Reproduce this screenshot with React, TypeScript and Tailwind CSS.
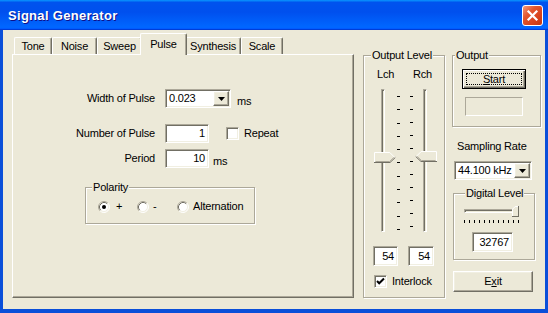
import React from "react";

const sunken =
  "border border-t-[#aca899] border-l-[#aca899] border-r-white border-b-white shadow-[inset_1px_1px_#716f64,inset_-1px_-1px_#f1efe2]";
const raised =
  "border border-t-white border-l-white border-r-[#716f64] border-b-[#716f64] shadow-[inset_-1px_-1px_#aca899,inset_1px_1px_#f1efe2]";
const track =
  "border border-t-[#aca899] border-l-[#aca899] border-r-white border-b-white shadow-[inset_1px_1px_#716f64] bg-[#ece9d8]";
const group = "border border-[#aca899] shadow-[1px_1px_#fff,inset_1px_1px_#fff]";

const tabs = [
  { label: "Tone", w: "w-[38px]" },
  { label: "Noise", w: "w-[45px]" },
  { label: "Sweep", w: "w-[45px]" },
  { label: "Pulse", w: "w-[47px]", active: true },
  { label: "Synthesis", w: "w-[56px]" },
  { label: "Scale", w: "w-[42px]" },
];

const Arrow = () => (
  <svg width="7" height="4" viewBox="0 0 7 4">
    <path d="M0 0H7L3.5 4Z" fill="#000" />
  </svg>
);

const Combo = ({ value, className }: { value: string; className: string }) => (
  <div className={`flex bg-white p-[1px] ${sunken} ${className}`}>
    <span className="flex-1 self-center pl-[2px]">{value}</span>
    <span className={`w-[16px] flex items-center justify-center bg-[#ece9d8] ${raised}`}>
      <Arrow />
    </span>
  </div>
);

const Edit = ({ value, className }: { value: string; className: string }) => (
  <div className={`flex items-center justify-end pr-[3px] bg-white ${sunken} ${className}`}>
    {value}
  </div>
);

const Checkbox = ({ checked = false }: { checked?: boolean }) => (
  <div className={`w-[13px] h-[13px] shrink-0 flex items-center justify-center bg-white ${sunken}`}>
    {checked && (
      <svg width="11" height="11" viewBox="0 0 11 11">
        <path d="M2 5l2.2 2.3L9 2.5" stroke="#000" strokeWidth="2" fill="none" />
      </svg>
    )}
  </div>
);

const Radio = ({ checked = false }: { checked?: boolean }) => (
  <svg width="12" height="12" viewBox="0 0 12 12" className="shrink-0">
    <circle cx="6" cy="6" r="5" fill="#fff" />
    <path d="M2.11 9.89A5.5 5.5 0 0 1 9.89 2.11" stroke="#aca899" fill="none" />
    <path d="M2.82 9.18A4.5 4.5 0 0 1 9.18 2.82" stroke="#716f64" fill="none" />
    <path d="M9.89 2.11A5.5 5.5 0 0 1 2.11 9.89" stroke="#fff" fill="none" />
    <path d="M9.18 2.82A4.5 4.5 0 0 1 2.82 9.18" stroke="#f1efe2" fill="none" />
    {checked && <circle cx="6" cy="6" r="2" fill="#000" />}
  </svg>
);

const VThumb = ({ className }: { className: string }) => (
  <svg width="22" height="11" viewBox="0 0 22 11" className={className}>
    <path d="M0 0H16L21.5 5.5L16 11H0Z" fill="#ece9d8" />
    <path d="M0.5 10.5V0.5H15.8L20.8 5.5" stroke="#fff" fill="none" />
    <path d="M0 10.5H16L21.3 5.5" stroke="#716f64" fill="none" />
    <path d="M1.5 9.5H15.6L19.8 5.5" stroke="#aca899" fill="none" />
  </svg>
);

const Ticks = ({ className }: { className: string }) => (
  <div className={`flex flex-col justify-between w-[3px] ${className}`}>
    {Array.from({ length: 11 }).map((_, i) => (
      <div key={i} className="h-[1px] w-[3px] bg-black" />
    ))}
  </div>
);

const CloseBtn = () => (
  <div className="w-[21px] h-[21px] rounded-[3px] border border-white bg-[linear-gradient(135deg,#f39a7c,#e2562f_35%,#d8421c_70%,#c23710)] flex items-center justify-center">
    <svg width="13" height="13" viewBox="0 0 13 13">
      <path d="M2.5 2.5L10.5 10.5M10.5 2.5L2.5 10.5" stroke="#fff" strokeWidth="2.2" strokeLinecap="square" />
    </svg>
  </div>
);

export default function App() {
  return (
    <div className="w-[548px] h-[313px] flex flex-col bg-[#0a4fd9] font-['Liberation_Sans',Arial,sans-serif] text-[11px] leading-[13px] tracking-[-0.2px] text-black overflow-hidden select-none">
      {/* title bar */}
      <div className="h-[30px] shrink-0 flex items-center justify-between pl-[8px] pr-[5px] bg-[linear-gradient(180deg,#0997ff,#0053ee_8%,#0050ee_40%,#0066ff_88%,#0066ff_93%,#005bff_95%,#003dd7_96%,#003dd7)]">
        <span className="text-white font-bold text-[13px] tracking-[0.3px] [text-shadow:1px_1px_#0f1089]">
          Signal Generator
        </span>
        <CloseBtn />
      </div>

      <div className="flex-1 flex mx-[3px] mb-[4px] pl-[9px] pt-[3px] bg-[#ece9d8]">
        {/* tab control */}
        <div className="flex flex-col w-[342px]">
          <div className="flex items-end h-[21px] pl-[2px]">
            {tabs.map((t) =>
              t.active ? (
                <div
                  key={t.label}
                  className={`relative z-10 -mx-[2px] -mb-[1px] h-[22px] ${t.w} flex items-center justify-center bg-[#ece9d8] border-t border-l border-t-white border-l-white border-r border-r-[#716f64] shadow-[inset_-1px_0_#aca899] rounded-t-[2px]`}
                >
                  {t.label}
                </div>
              ) : (
                <div
                  key={t.label}
                  className={`h-[17px] ${t.w} flex items-center justify-center border-t border-l border-t-white border-l-white border-r border-r-[#716f64] shadow-[inset_-1px_0_#aca899] rounded-t-[2px]`}
                >
                  {t.label}
                </div>
              )
            )}
          </div>
          <div className="h-[244px] flex flex-col pt-[34px] border border-t-white border-l-white border-r-[#716f64] border-b-[#716f64] shadow-[inset_-1px_-1px_#aca899]">
            <div className="flex items-center">
              <span className="w-[142px] text-right">Width of Pulse</span>
              <Combo value="0.023" className="ml-[10px] w-[66px] h-[19px]" />
              <span className="ml-[6px] mt-[5px]">ms</span>
            </div>
            <div className="flex items-center mt-[16px]">
              <span className="w-[142px] text-right">Number of Pulse</span>
              <Edit value="1" className="ml-[10px] w-[44px] h-[19px]" />
              <div className="ml-[17px]">
                <Checkbox />
              </div>
              <span className="ml-[5px]">Repeat</span>
            </div>
            <div className="flex items-center mt-[6px]">
              <span className="w-[142px] text-right">Period</span>
              <Edit value="10" className="ml-[10px] w-[44px] h-[19px]" />
              <span className="ml-[4px] mt-[5px]">ms</span>
            </div>
            <fieldset className={`mt-[13px] ml-[72px] w-[170px] ${group}`}>
              <legend className="ml-[6px] px-[1px] bg-[#ece9d8]">Polarity</legend>
              <div className="flex items-center pl-[12px] pt-[6px] pb-[10px]">
                <div className="flex items-center gap-[6px] w-[39px]">
                  <Radio checked />
                  <span>+</span>
                </div>
                <div className="flex items-center gap-[4px] w-[40px]">
                  <Radio />
                  <span>-</span>
                </div>
                <div className="flex items-center gap-[4px]">
                  <Radio />
                  <span>Alternation</span>
                </div>
              </div>
            </fieldset>
          </div>
        </div>

        {/* output level */}
        <fieldset className={`ml-[9px] mt-[16px] w-[82px] h-[249px] ${group}`}>
          <legend className="ml-[7px] px-[1px] bg-[#ece9d8]">Output Level</legend>
          <div className="flex mt-[6px]">
            <span className="ml-[13px] w-[36px]">Lch</span>
            <span>Rch</span>
          </div>
          <div className="flex mt-[8px] ml-[10px] h-[143px]">
            <div className="relative w-[22px] h-full">
              <div className={`ml-[7px] w-[4px] h-full ${track}`} />
              <VThumb className="absolute left-0 top-[63px]" />
            </div>
            <Ticks className="ml-[1px] mt-[7px] h-[134px]" />
            <Ticks className="ml-[10px] mt-[7px] h-[131px]" />
            <div className="relative ml-[2px] w-[22px] h-full">
              <div className={`ml-[8px] w-[4px] h-full ${track}`} />
              <VThumb className="absolute left-0 top-[62px] -scale-x-100" />
            </div>
          </div>
          <div className="flex mt-[14px]">
            <Edit value="54" className="ml-[9px] w-[25px] h-[20px]" />
            <Edit value="54" className="ml-[10px] w-[26px] h-[20px]" />
          </div>
          <div className="flex items-center mt-[9px] ml-[10px]">
            <Checkbox checked />
            <span className="ml-[5px]">Interlock</span>
          </div>
        </fieldset>

        {/* right column */}
        <div className="flex flex-col ml-[7px] w-[89px]">
          <fieldset className={`mt-[16px] w-[89px] ${group}`}>
            <legend className="ml-[2px] px-[1px] bg-[#ece9d8]">Output</legend>
            <div className="flex flex-col pb-[10px]">
              <div className="mt-[7px] ml-[9px] w-[64px] h-[20px] flex border border-black shadow-[inset_1px_1px_#fff,inset_-1px_-1px_#716f64,inset_-2px_-2px_#aca899]">
                <div className="flex-1 m-[3px] flex items-center justify-center border border-dotted border-black">
                  <span>
                    <span className="underline">S</span>tart
                  </span>
                </div>
              </div>
              <div className="mt-[8px] ml-[12px] w-[58px] h-[19px] border border-t-[#aca899] border-l-[#aca899] border-r-white border-b-white" />
            </div>
          </fieldset>
          <span className="mt-[13px] ml-[5px]">Sampling Rate</span>
          <Combo value="44.100 kHz" className="mt-[8px] ml-[2px] w-[78px] h-[19px]" />
          <fieldset className={`mt-[7px] ml-[1px] w-[82px] ${group}`}>
            <legend className="ml-[11px] px-[1px] bg-[#ece9d8]">Digital Level</legend>
            <div className="flex flex-col pb-[7px]">
              <div className="relative mt-[5px] ml-[10px] w-[55px] h-[12px]">
                <div className={`mt-[4px] w-full h-[4px] ${track}`} />
                <svg width="7" height="11" viewBox="0 0 7 11" className="absolute right-0 top-[1px]">
                  <path d="M0 3L3 0H7V11H0Z" fill="#ece9d8" />
                  <path d="M0.5 11V3.2L3.2 0.5H6" stroke="#fff" fill="none" />
                  <path d="M6.5 0V11" stroke="#716f64" fill="none" />
                  <path d="M0 10.5H7" stroke="#716f64" fill="none" />
                </svg>
              </div>
              <div className="mt-[3px] ml-[10px] w-[55px] h-[3px] flex justify-between">
                {Array.from({ length: 12 }).map((_, i) => (
                  <div key={i} className="w-[1px] h-[3px] bg-black" />
                ))}
              </div>
              <Edit value="32767" className="mt-[9px] ml-[18px] w-[41px] h-[20px]" />
            </div>
          </fieldset>
          <div className={`mt-[11px] ml-[1px] w-[80px] h-[21px] flex items-center justify-center bg-[#ece9d8] ${raised}`}>
            <span>
              E<span className="underline">x</span>it
            </span>
          </div>
        </div>
      </div>
    </div>
  );
}
